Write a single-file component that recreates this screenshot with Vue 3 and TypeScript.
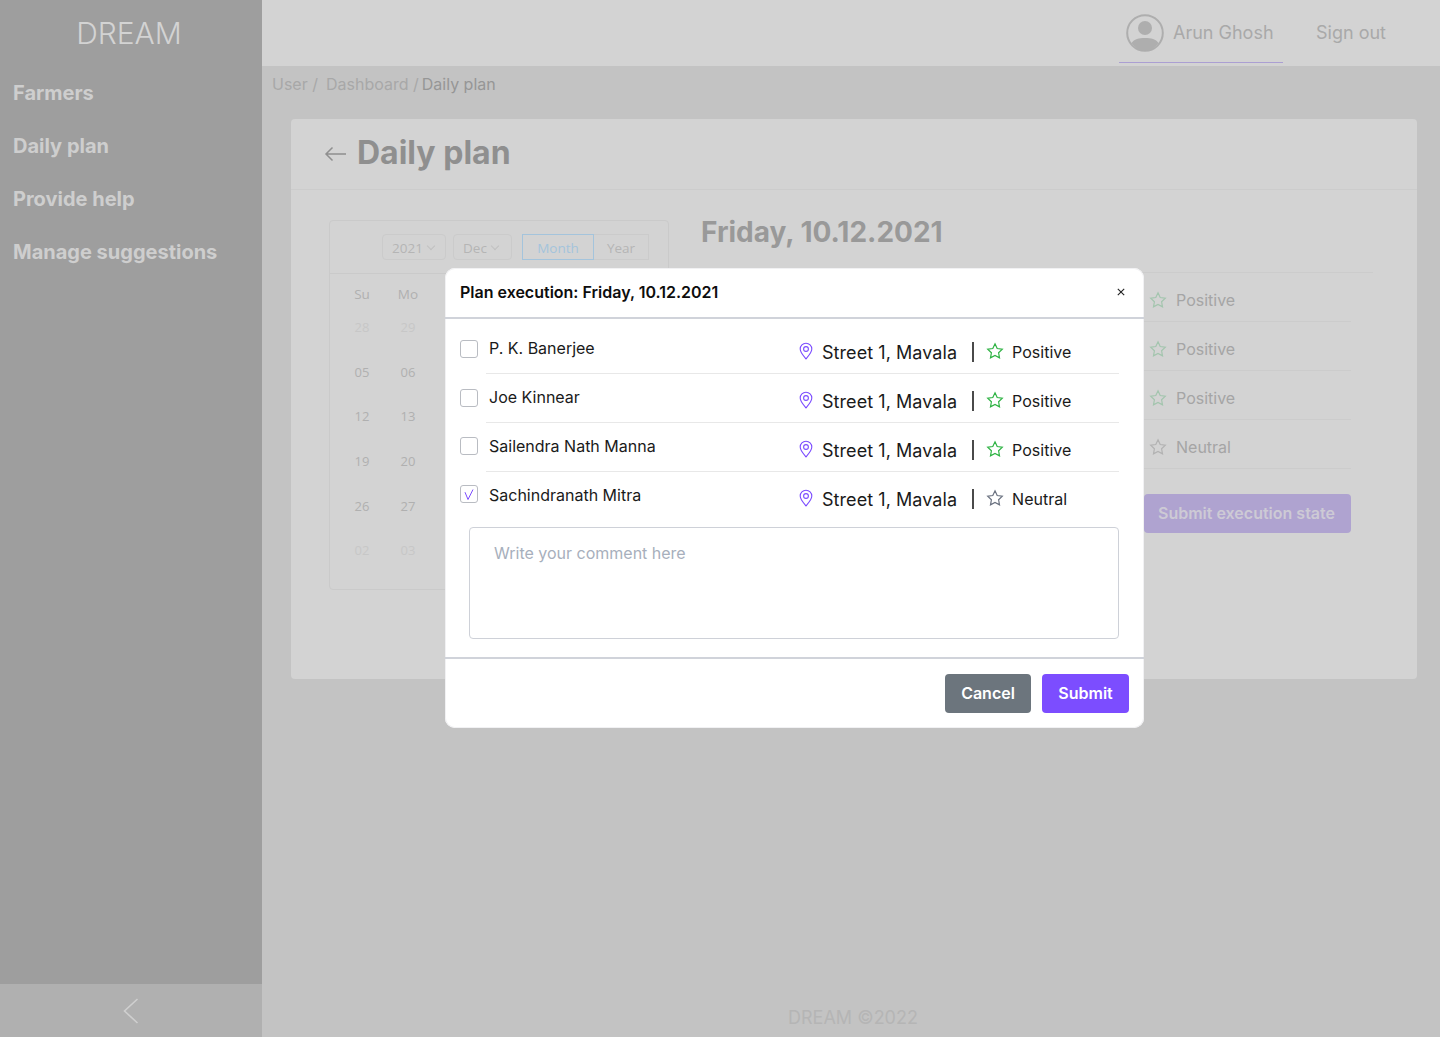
<template>
  <div class="app">
    <aside class="sidebar">
      <div class="logo">DREAM</div>
      <nav class="menu">
        <a v-for="item in menu" :key="item" class="menu-item">{{ item }}</a>
      </nav>
      <div class="collapse">
        <svg width="16" height="26" viewBox="0 0 16 26" fill="none" stroke="#cfcfcf" stroke-width="1.6">
          <path d="M14.5 1 1.5 13l13 12" />
        </svg>
      </div>
    </aside>

    <div class="main">
      <header class="topbar">
        <div class="user">
          <svg width="38" height="38" viewBox="0 0 38 38">
            <circle cx="19" cy="19" r="17.8" fill="none" stroke="#aeaeae" stroke-width="2" />
            <circle cx="19" cy="14" r="7" fill="#aeaeae" />
            <path d="M5.5 29C8 25 13 24 19 24s11 1 13.500 5C29 34 24 37 19 37S9 34 5.500 29z" fill="#aeaeae" />
          </svg>
          <span>Arun Ghosh</span>
        </div>
        <a class="signout">Sign out</a>
      </header>

      <div class="breadcrumb">
        <span>User /</span><span class="crumb-gap">Dashboard /</span><span class="current">Daily plan</span>
      </div>

      <section class="card">
        <div class="card-head">
          <svg width="24" height="16" viewBox="0 0 24 16" fill="none" stroke="#8f8f8f" stroke-width="1.5">
            <path d="M22 8H2M8.500 1.500 2 8l6.500 6.500" />
          </svg>
          <h1>Daily plan</h1>
        </div>
        <div class="card-body">
          <div class="calendar">
            <div class="cal-head">
              <span class="select">2021 <i class="chev"></i></span>
              <span class="select dec">Dec <i class="chev"></i></span>
              <div class="switch">
                <span class="active">Month</span>
                <span>Year</span>
              </div>
            </div>
            <div class="cal-grid">
              <span v-for="d in calDays" :key="d.text" class="cell" :class="{ off: d.off, week: d.week }">{{ d.text }}</span>
            </div>
          </div>
          <div class="plan">
            <h2>Friday, 10.12.2021</h2>
            <ul class="plan-list">
              <li v-for="(p, i) in people" :key="i" class="plan-row">
                <svg class="star" :class="{ neutral: p.state === 'Neutral' }" width="18" height="18" viewBox="0 0 18 18">
                  <path :d="starPath" />
                </svg>
                <span>{{ p.state }}</span>
              </li>
            </ul>
            <button class="submit-state">Submit execution state</button>
          </div>
        </div>
      </section>

      <footer class="footer">DREAM ©2022</footer>
    </div>

    <div class="modal">
      <div class="modal-head">
        <span>Plan execution: Friday, 10.12.2021</span>
        <svg width="8" height="8" viewBox="0 0 8 8" stroke="#222" stroke-width="1.100">
          <path d="M.8.8l6.400 6.400M7.200.8.8 7.200" />
        </svg>
      </div>
      <div class="modal-body">
        <div v-for="(p, i) in people" :key="i" class="row">
          <span class="check" :class="{ checked: p.checked }">
            <svg v-if="p.checked" width="10" height="11" viewBox="0 0 10 11" fill="none" stroke="#7c4dff" stroke-width="1">
              <path d="M1 3.200 4 10.500 9 .5" />
            </svg>
          </span>
          <div class="row-main">
            <span class="name">{{ p.name }}</span>
            <div class="meta">
              <svg class="pin" width="14" height="18" viewBox="0 0 14 18" fill="none" stroke="#7c4dff" stroke-width="1.100">
                <path d="M7 16.800C4.500 13.800 1.200 10.500 1.200 7a5.800 5.800 0 0 1 11.600 0c0 3.500-3.300 6.800-5.800 9.800z" />
                <circle cx="7" cy="7" r="2.400" />
              </svg>
              <span class="street">Street 1, Mavala</span>
              <span class="sep"></span>
              <svg class="star" :class="{ neutral: p.state === 'Neutral' }" width="18" height="18" viewBox="0 0 18 18">
                <path :d="starPath" />
              </svg>
              <span class="state">{{ p.state }}</span>
            </div>
          </div>
        </div>
        <div class="comment">Write your comment here</div>
      </div>
      <div class="modal-foot">
        <button class="btn cancel">Cancel</button>
        <button class="btn submit">Submit</button>
      </div>
    </div>
  </div>
</template>

<script setup lang="ts">
const menu = ['Farmers', 'Daily plan', 'Provide help', 'Manage suggestions']

const people = [
  { name: 'P. K. Banerjee', state: 'Positive', checked: false },
  { name: 'Joe Kinnear', state: 'Positive', checked: false },
  { name: 'Sailendra Nath Manna', state: 'Positive', checked: false },
  { name: 'Sachindranath Mitra', state: 'Neutral', checked: true }
]

const starPath = 'M9 1.800l2.200 4.700 5.100.7-3.700 3.600.9 5.100L9 13.500l-4.500 2.400.9-5.100L1.700 7.200l5.100-.7z'

const calDays = [
  { text: 'Su', week: true },
  { text: 'Mo', week: true },
  { text: '28', off: true },
  { text: '29', off: true },
  { text: '05' },
  { text: '06' },
  { text: '12' },
  { text: '13' },
  { text: '19' },
  { text: '20' },
  { text: '26' },
  { text: '27' },
  { text: '02', off: true },
  { text: '03', off: true }
]
</script>

<style>
body {
  margin: 0;
}
</style>

<style scoped>
.app {
  position: relative;
  display: flex;
  height: 1037px;
  overflow: hidden;
  font-family: Inter, "Liberation Sans", sans-serif;
  background: #c3c3c3;
}

.sidebar {
  width: 262px;
  flex-shrink: 0;
  display: flex;
  flex-direction: column;
  background: #9e9e9e;
}

.logo {
  height: 67px;
  line-height: 67px;
  text-align: center;
  font-size: 30px;
  font-weight: 300;
  color: #d3d3d3;
  margin-left: -4px;
}

.menu {
  flex: 1;
  display: flex;
  flex-direction: column;
}

.menu-item {
  height: 53px;
  line-height: 53px;
  padding-left: 13px;
  font-size: 20px;
  font-weight: 700;
  color: #cecece;
}

.collapse {
  height: 53px;
  display: flex;
  align-items: center;
  justify-content: center;
  background: #b0b0b0;
}

.main {
  flex: 1;
  min-width: 0;
  display: flex;
  flex-direction: column;
}

.topbar {
  height: 66px;
  display: flex;
  justify-content: flex-end;
  align-items: flex-start;
  background: #d3d3d3;
  color: #a9a9a9;
  font-size: 18px;
}

.user {
  width: 164px;
  height: 63px;
  box-sizing: border-box;
  padding-left: 7px;
  padding-top: 14px;
  display: flex;
  align-items: flex-start;
  gap: 9px;
  border-bottom: 1px solid #ab9fd2;
}

.user span {
  line-height: 38px;
}

.signout {
  width: 124px;
  box-sizing: border-box;
  padding-left: 33px;
  padding-top: 14px;
  line-height: 38px;
  margin-right: 33px;
}

.breadcrumb {
  height: 37px;
  box-sizing: border-box;
  padding: 0 0 2px 10px;
  display: flex;
  align-items: center;
  font-size: 16px;
  color: #a8a8a8;
}

.crumb-gap {
  margin-left: 8px;
}

.current {
  margin-left: 3px;
  color: #969696;
}

.card {
  width: 1126px;
  height: 560px;
  margin-top: 16px;
  margin-left: 29px;
  background: #d3d3d3;
  border-radius: 4px;
}

.card-head {
  height: 71px;
  box-sizing: border-box;
  padding-left: 33px;
  display: flex;
  align-items: center;
  gap: 9px;
  border-bottom: 1px solid #cccccc;
}

.card-head h1 {
  margin: 0 0 4px;
  font-size: 32px;
  font-weight: 700;
  color: #8f8f8f;
}

.card-body {
  display: flex;
  padding: 30px 44px 0 38px;
}

.calendar {
  width: 340px;
  height: 370px;
  box-sizing: border-box;
  border: 1px solid #cacaca;
  border-radius: 4px;
  flex-shrink: 0;
}

.cal-head {
  height: 53px;
  box-sizing: border-box;
  padding: 13px 0 0 52px;
  display: flex;
  align-items: flex-start;
  border-bottom: 1px solid #cacaca;
  font-size: 13.500px;
  font-family: "Open Sans", sans-serif;
  color: #b5b5b5;
}

.select {
  width: 64px;
  height: 26px;
  box-sizing: border-box;
  border: 1px solid #cbcbcb;
  border-radius: 4px;
  display: flex;
  align-items: center;
  padding: 1px 0 0 9px;
  gap: 5px;
  margin-right: 7px;
}

.select.dec {
  width: 59px;
  margin-right: 10px;
}

.chev {
  width: 5px;
  height: 5px;
  border-right: 1px solid #c0c0c0;
  border-bottom: 1px solid #c0c0c0;
  transform: translateY(-2px) rotate(45deg);
}

.switch {
  display: flex;
  height: 26px;
  box-sizing: border-box;
}

.switch span {
  width: 55px;
  box-sizing: border-box;
  border: 1px solid #cbcbcb;
  border-left: 0;
  line-height: 26px;
  text-align: center;
}

.switch .active {
  width: 72px;
  border: 1px solid #a4c4dc;
  color: #a4c4dc;
}

.cal-grid {
  display: grid;
  grid-template-columns: 46px 46px;
  grid-template-rows: 23px;
  grid-auto-rows: 44.600px;
  padding: 8px 0 0 9px;
  font-family: "Open Sans", sans-serif;
  font-size: 13px;
  color: #b0b0b0;
}

.cell {
  display: flex;
  align-items: center;
  justify-content: center;
}

.cell.week {
  font-size: 13.500px;
}

.cell.off {
  color: #c7c7c7;
}

.plan {
  flex: 1;
  margin-left: 32px;
}

.plan h2 {
  margin: 0;
  height: 53px;
  box-sizing: border-box;
  line-height: 25px;
  font-size: 28px;
  font-weight: 700;
  color: #999999;
  border-bottom: 1px solid #cccccc;
}

.plan-list {
  list-style: none;
  margin: 0;
  padding: 0 22px 0 443px;
}

.plan-row {
  height: 49px;
  box-sizing: border-box;
  padding: 6px 0 0 5px;
  display: flex;
  align-items: center;
  gap: 9px;
  font-size: 16px;
  color: #a5a5a5;
  border-bottom: 1px solid #cccccc;
}

.plan-row .star {
  stroke: #a3c5ae;
}

.plan-row .star.neutral {
  stroke: #b2b2b2;
}

.submit-state {
  display: block;
  margin: 25px 0 0 443px;
  width: 207px;
  height: 39px;
  border: 0;
  border-radius: 4px;
  background: #afa3d0;
  color: #cdcad5;
  font: 600 16px Inter, sans-serif;
  text-align: right;
  padding: 0 16px 2px 0;
}

.star {
  fill: none;
  stroke: #2fb344;
  stroke-width: 1.200;
  flex-shrink: 0;
}

.star.neutral {
  stroke: #6b7280;
}

.footer {
  margin-top: auto;
  height: 40px;
  padding-left: 4px;
  text-align: center;
  font-size: 18px;
  line-height: 42px;
  color: #b5b5b5;
}

.modal {
  position: absolute;
  left: 445px;
  top: 268px;
  width: 699px;
  height: 460px;
  display: flex;
  flex-direction: column;
  background: #fff;
  border-radius: 10px;
  box-shadow: inset 0 0 0 1px #f1f1f3;
  color: #1a1a1a;
}

.modal-head {
  height: 51px;
  box-sizing: border-box;
  padding: 0 19px 2px 15px;
  display: flex;
  align-items: center;
  justify-content: space-between;
  border-bottom: 2px solid #d0d3da;
  font-size: 16px;
  font-weight: 600;
  color: #0d0d0d;
}

.modal-body {
  flex: 1;
  padding: 6px 25px 0 15px;
}

.row {
  display: flex;
  align-items: flex-start;
}

.check {
  width: 18px;
  height: 18px;
  box-sizing: border-box;
  margin-top: 15px;
  margin-right: 8px;
  flex-shrink: 0;
  border: 1px solid #b9bcc2;
  border-radius: 3px;
  display: flex;
  align-items: center;
  justify-content: center;
}

.row:nth-child(3) .check {
  margin-top: 14px;
}

.row:nth-child(4) .check {
  margin-top: 13px;
}

.row-main {
  flex: 1;
  height: 49px;
  box-sizing: border-box;
  padding-left: 3px;
  display: flex;
  justify-content: space-between;
  border-bottom: 1px solid #e8e8e8;
}

.row:nth-child(4) .row-main {
  border-bottom: 0;
}

.name {
  font-size: 16px;
  line-height: 46px;
}

.meta {
  width: 320px;
  height: 48px;
  margin-top: 3px;
  display: flex;
  align-items: center;
}

.meta .pin,
.meta .star {
  margin-top: -2px;
}

.street {
  margin-left: 9px;
  font-size: 18px;
  letter-spacing: 0.060px;
}

.sep {
  width: 2px;
  height: 20px;
  margin: 0 12px 0 15px;
  background: #4a4a4a;
}

.state {
  margin-left: 8px;
  font-size: 16px;
}

.comment {
  margin: 6px 0 0 9px;
  height: 112px;
  box-sizing: border-box;
  border: 1px solid #ced1d8;
  border-radius: 4px;
  padding: 15px 24px;
  font-size: 16px;
  color: #a7afbc;
}

.modal-foot {
  height: 71px;
  box-sizing: border-box;
  border-top: 2px solid #d0d3da;
  padding: 15px 15px 0 0;
  display: flex;
  justify-content: flex-end;
  gap: 11px;
}

.btn {
  height: 39px;
  border: 0;
  border-radius: 4px;
  padding: 0 0 2px;
  color: #fff;
  font: 600 16px Inter, sans-serif;
}

.cancel {
  width: 86px;
  background: #6c757d;
}

.submit {
  width: 87px;
  background: #7c4dff;
}
</style>
